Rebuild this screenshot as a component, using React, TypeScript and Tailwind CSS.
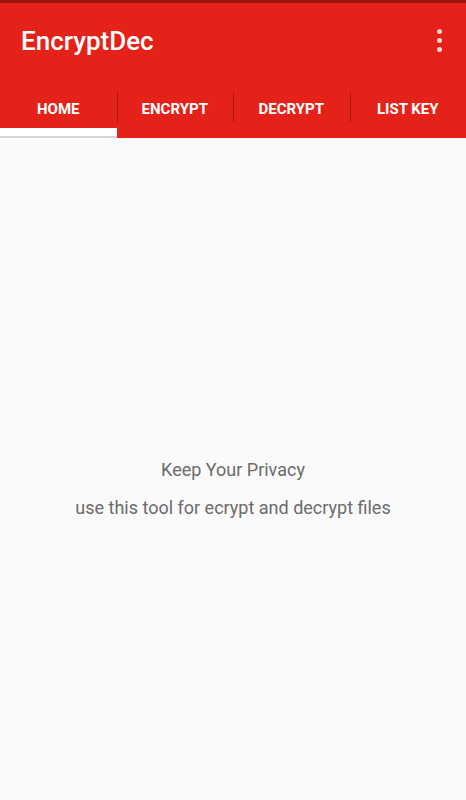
export default function App() {
  const tabs = ['HOME', 'ENCRYPT', 'DECRYPT', 'LIST KEY'];

  return (
    <main className="flex min-h-screen flex-col bg-[#fafafa] font-['Roboto',sans-serif]">
      {/* Status bar strip */}
      <div className="h-[3px] bg-[#9b1510]" />

      {/* App bar */}
      <header className="bg-[#e52219] text-white">
        <div className="flex h-[77px] items-center justify-between pl-[21px] pr-[24px]">
          <h1 className="text-[26px] font-medium">EncryptDec</h1>
          <div className="flex flex-col gap-[4px] pb-[2px]">
            <span className="h-[5px] w-[5px] rounded-full bg-white/80" />
            <span className="h-[5px] w-[5px] rounded-full bg-white/80" />
            <span className="h-[5px] w-[5px] rounded-full bg-white/80" />
          </div>
        </div>

        {/* Tabs */}
        <nav className="flex h-[58px]">
          {tabs.map((label, i) => (
            <div key={label} className="relative flex flex-1 items-start justify-center">
              {i > 0 && <span className="absolute left-0 top-[12px] h-[30px] w-px bg-[#a8160f]" />}
              <span className="pt-[18px] text-[15px] font-bold">{label}</span>
              {i === 0 && <span className="absolute bottom-[2px] left-0 right-0 h-[8px] bg-white" />}
              {i === 0 && <span className="absolute bottom-0 left-0 right-0 h-[2px] bg-[#d6d6d6]" />}
            </div>
          ))}
        </nav>
      </header>

      {/* Content */}
      <section className="flex flex-1 flex-col items-center pt-[318px] text-[18px] text-[#6b6b6b]">
        <p>Keep Your Privacy</p>
        <p className="mt-[11px]">use this tool for ecrypt and decrypt files</p>
      </section>
    </main>
  );
}
